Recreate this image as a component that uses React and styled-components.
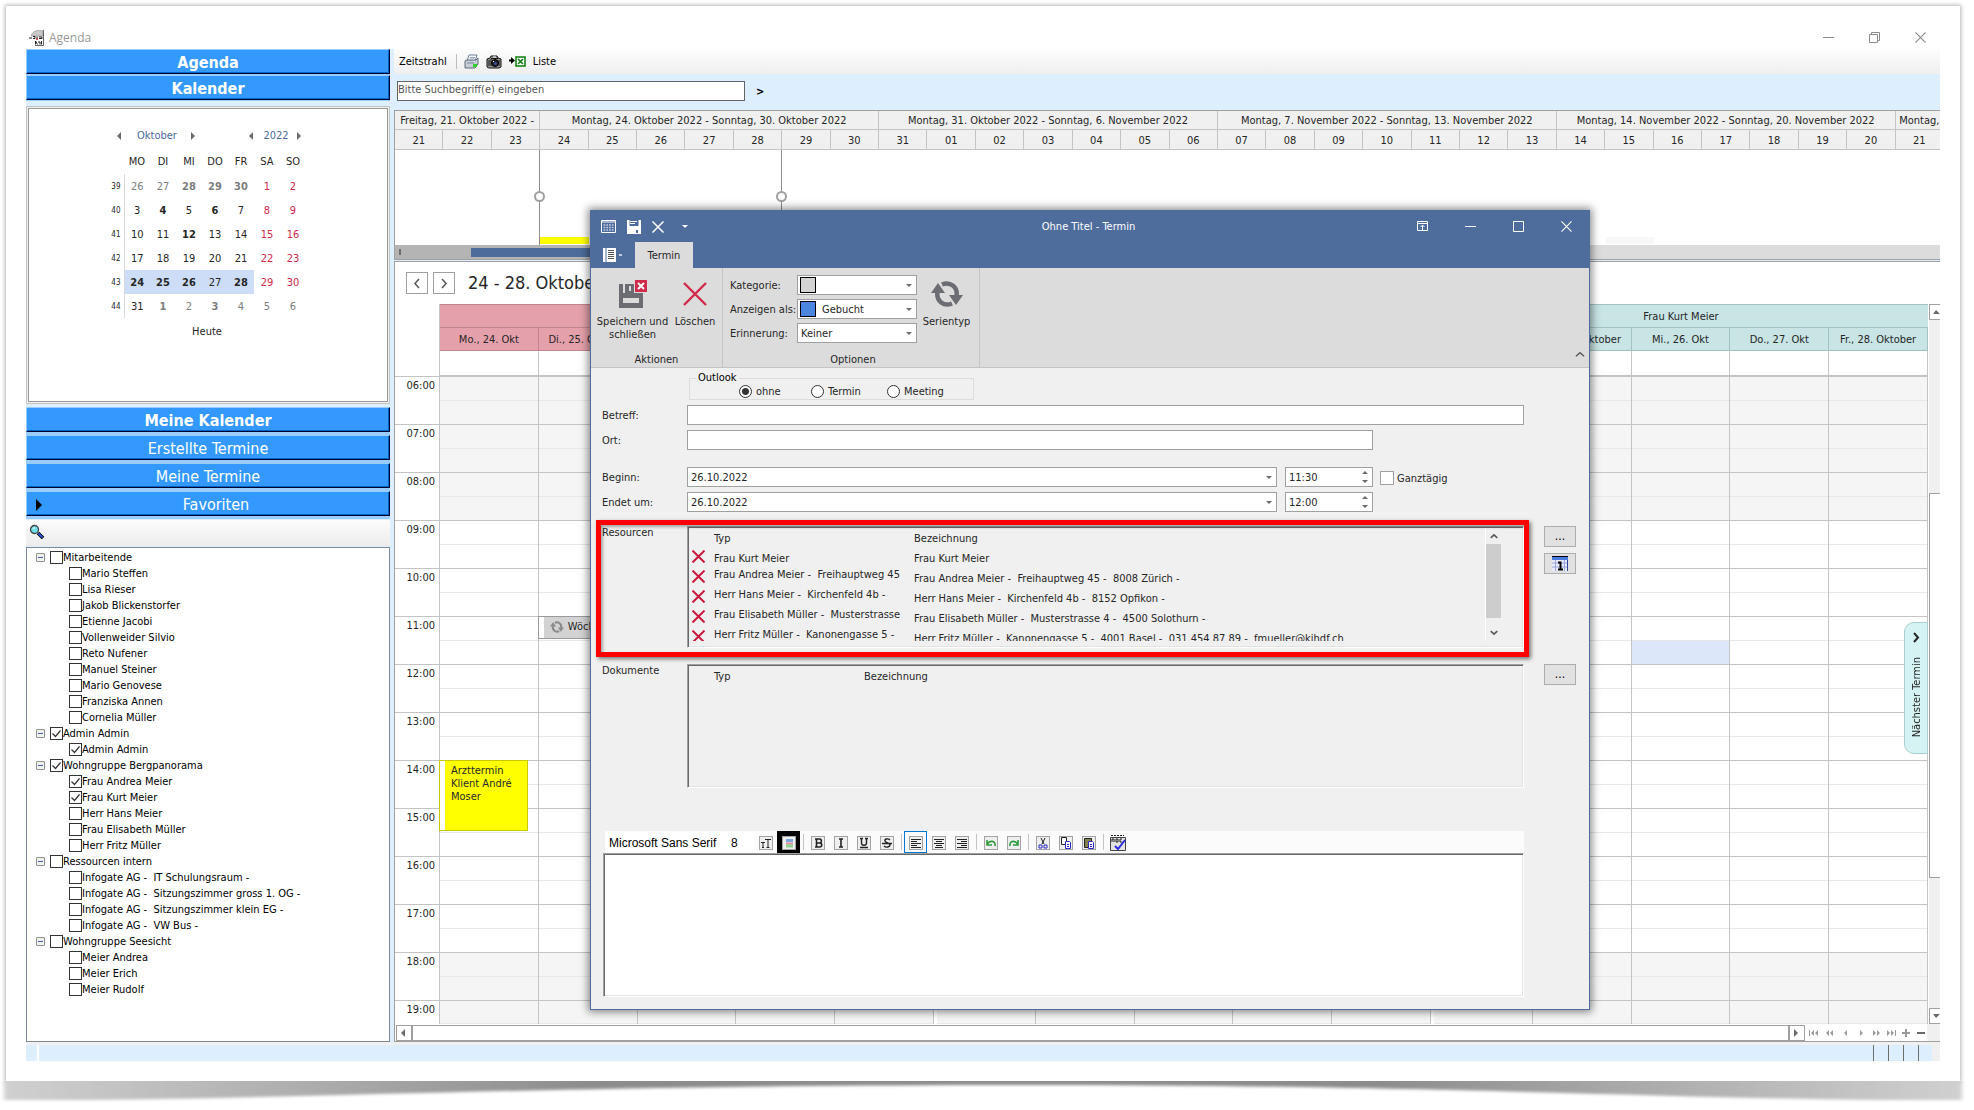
import React from 'react';
import styled, { createGlobalStyle, css } from 'styled-components';

const GlobalStyle = createGlobalStyle`
  *, *::before, *::after {
    box-sizing: border-box;
  }
  body {
    margin: 0;
    background: #ffffff;
    color: #262626;
    font-family: Tahoma, 'DejaVu Sans Condensed', 'DejaVu Sans', sans-serif;
    font-size: 11px;
    line-height: 13px;
  }
  button, input, select, textarea {
    font: inherit;
    color: inherit;
    margin: 0;
    padding: 0;
    border-radius: 0;
  }
  button {
    border: 0;
    background: none;
    cursor: pointer;
  }
  svg {
    display: block;
    flex: none;
  }
`;

/* ---------- window ---------- */

const Page = styled.div`
  padding: 6px 14px 29px 6px;
`;

const Window = styled.main`
  position: relative;
  padding: 18px 20px 20px;
  background: #ffffff;
  box-shadow: 0 0 4px 1px rgba(0, 0, 0, 0.3);
`;

const CurlShadow = styled.svg`
  position: absolute;
  left: 0;
  top: 100%;
  width: 100%;
  height: 24px;
  overflow: visible;
`;

const TitleBar = styled.header`
  display: flex;
  align-items: center;
  height: 25px;
  padding: 2px 14px 0 3px;
  color: #999999;
  font-family: 'Open Sans', sans-serif;
  font-size: 12px;

  h1 {
    flex: 1;
    margin: 0 0 0 4px;
    font-size: 12px;
    font-weight: 400;
  }
`;

const WindowButtons = styled.div`
  display: flex;
  gap: 35px;
  color: #8a8a8a;
`;

const Columns = styled.div`
  display: grid;
  grid-template-columns: 364px minmax(0, 1fr);
  column-gap: 4px;
  background: #ddeeff;
`;

/* ---------- sidebar ---------- */

const Sidebar = styled.aside`
  display: flex;
  flex-direction: column;
`;

const BarButton = styled.button`
  position: relative;
  display: flex;
  flex: none;
  align-items: center;
  justify-content: center;
  height: 25px;
  padding: 2px 0 0 ${p => (p.$indent ? 16 : 0)}px;
  border: 1px solid #000033;
  border-top-color: #99ccff;
  border-left-color: #99ccff;
  background: #3399ff;
  box-shadow: inset -1px -1px 0 #0066cc;
  color: #ffffff;
  font-size: 16px;
  font-weight: ${p => (p.$bold ? 700 : 400)};

  svg {
    position: absolute;
    left: 9px;
  }
`;

const BarGroup = styled.div`
  display: flex;
  flex-direction: column;
  gap: ${p => p.$gap}px;
  padding-bottom: ${p => p.$gap}px;
  background: #99ccff;
`;

const CalendarFrame = styled.section`
  height: 298px;
  margin: 5px 0 3px;
  padding: 1px;
  border: 1px solid #c4c4c4;
  background: #f0f0f0;
`;

const CalendarBody = styled.div`
  display: flex;
  flex-direction: column;
  align-items: center;
  height: 100%;
  padding: 18px 2px 0 0;
  border: 1px solid #9a9a9a;
  background: #ffffff;
`;

const MonthNav = styled.div`
  display: flex;
  align-items: center;
  width: 194px;
  height: 16px;
  padding: 1px 0 0 6px;
  color: #4d6b9b;

  span {
    text-align: center;
  }
`;

const MonthName = styled.span`
  width: 66px;
`;

const YearName = styled.span`
  width: 40px;
`;

const NavGap = styled.i`
  flex: 1;
`;

const MonthTable = styled.table`
  width: 198px;
  border-collapse: collapse;
  table-layout: fixed;

  th, td {
    width: 26px;
    height: 24px;
    padding: 0;
    text-align: center;
    font-weight: 400;
  }
  thead th {
    height: 31px;
    padding-top: 6px;
  }
  th:first-child {
    width: 16px;
    padding-right: 3px;
    text-align: right;
    font-size: 8px;
  }
  tbody th {
    border-right: 1px solid #d9d9d9;
  }
`;

const Day = styled.td`
  && {
    font-weight: ${p => (p.$bold ? 700 : 400)};
  }
  color: ${p => ({ out: '#7d7d7d', red: '#d1294a' }[p.$tone] || '#262626')};
  background: ${p => (p.$selected ? '#cddcf7' : 'none')};
`;

const TodayButton = styled.button`
  height: 27px;
`;

const SearchStrip = styled.div`
  flex: none;
  height: 26px;
  margin: 1px 0;
  padding: 4px 3px;
  background: linear-gradient(#fcfcfc, #ececec);
`;

const Tree = styled.ul`
  flex: 1;
  margin: 0;
  padding: 1px 0 0 9px;
  border: 1px solid #7f8896;
  background: #ffffff;
  color: #000000;
  list-style: none;
`;

const TreeRow = styled.li`
  display: flex;
  align-items: center;
  height: 16px;
  padding-left: ${p => (p.$child ? 33 : 0)}px;
  white-space: pre;

  label {
    display: flex;
    align-items: center;
  }
`;

const Expander = styled.button`
  width: 9px;
  height: 9px;
  margin-right: 5px;
  border: 1px solid #919191;
  border-radius: 1px;
  background: linear-gradient(#4b63a7, #4b63a7) center / 5px 1px no-repeat, #f1f1f1;
`;

const tick = css`
  &:checked {
    background: #ffffff
      url("data:image/svg+xml,%3Csvg xmlns='http://www.w3.org/2000/svg' viewBox='0 0 11 11'%3E%3Cpath d='M1.5 5.5l3 3 5-6' fill='none' stroke='%23333' stroke-width='1.2'/%3E%3C/svg%3E")
      center / 11px 11px no-repeat;
  }
`;

const CheckBox = styled.input.attrs({ type: 'checkbox' })`
  appearance: none;
  width: ${p => p.$size || 13}px;
  height: ${p => p.$size || 13}px;
  flex: none;
  border: 1px solid ${p => p.$line || '#333333'};
  background: #ffffff;
  ${tick}
`;

/* ---------- planner ---------- */

const Planner = styled.section`
  display: flex;
  flex-direction: column;
  min-width: 0;
`;

const Toolbar = styled.div`
  display: flex;
  align-items: center;
  gap: 7px;
  height: 25px;
  padding-left: 5px;
  background: linear-gradient(#fdfdfd, #efefef);
  color: #000000;
`;

const ToolSeparator = styled.i`
  width: 1px;
  height: 15px;
  margin-left: 2px;
  background: #bdbdbd;
`;

const SearchRow = styled.form`
  display: flex;
  align-items: center;
  gap: 11px;
  height: 36px;
  padding: 2px 0 4px 3px;

  input {
    width: 348px;
    height: 20px;
    padding-bottom: 4px;
    border: 1px solid #646464;
    background: #ffffff;
  }
  input::placeholder {
    color: #555555;
    opacity: 1;
  }
  button {
    color: #000000;
    font-weight: 700;
  }
`;

const Timeline = styled.div`
  overflow: hidden;
  border: 1px solid #a0a0a0;
  border-right: 0;
  background: #ffffff;
`;

const TimelineGrid = styled.div`
  display: grid;
  grid-template-columns: repeat(32, 1fr);
  margin-right: -4px;
  background: #f0f0f0;
`;

const TimelineCell = styled.div`
  grid-column: span ${p => p.$span || 1};
  height: ${p => (p.$span ? 19 : 20)}px;
  padding-top: ${p => (p.$span ? 3 : 4)}px;
  overflow: hidden;
  border-right: 1px solid #c4c4c4;
  border-bottom: 1px solid #c4c4c4;
  text-align: center;
  white-space: nowrap;
`;

const TimelineBody = styled.div`
  position: relative;
  height: 95px;
  margin-right: -4px;
`;

const RangeEdge = styled.div`
  position: absolute;
  top: 0;
  bottom: 0;
  width: 1px;
  margin-left: -1px;
  background: #8f8f8f;

  &::after {
    content: '';
    position: absolute;
    top: 41px;
    left: -5px;
    width: 11px;
    height: 11px;
    border: 2px solid #a0a0a0;
    border-radius: 50%;
    background: #ffffff;
  }
`;

const TimelineEvent = styled.div`
  position: absolute;
  bottom: 1px;
  height: 7px;
  background: ${p => p.$color};
`;

const TimelineScroll = styled.div`
  height: 14px;
  padding: 3px 0 2px 4px;
  background: linear-gradient(90deg, #b4b4b4 60%, #dcdcdc 60%);
  display: flex;
  gap: 70px;

  i {
    width: 2px;
    height: 6px;
    margin-top: 1px;
    background: #6d6d6d;
  }
  div {
    width: 45%;
    height: 9px;
    background: #4d6b9b;
  }
`;

const Scheduler = styled.div`
  display: flex;
  flex: 1;
  flex-direction: column;
  margin-top: 1px;
  border: 1px solid #a0a0a0;
  border-right: 0;
  background: #ffffff;
`;

const WeekBar = styled.div`
  display: flex;
  align-items: center;
  gap: 5px;
  height: 42px;
  padding: 0 0 0 11px;

  h2 {
    margin: 0 0 0 8px;
    font-size: 18px;
    line-height: 20px;
    font-weight: 400;
  }
`;

const StepButton = styled.button`
  display: flex;
  align-items: center;
  justify-content: center;
  width: 22px;
  height: 22px;
  border: 1px solid #a0a0a0;
`;

const DayGrid = styled.div`
  position: relative;
  display: grid;
  grid-template-columns: 45px minmax(0, 1fr) 12px;
`;

const TimeColumn = styled.div`
  padding-top: 72px;
  border-right: 1px solid #c4c4c4;
`;

const HourLabel = styled.div`
  height: ${p => (p.$last ? 24 : 48)}px;
  padding: 2px 4px 0 0;
  border-top: 1px solid #c4c4c4;
  text-align: right;
`;

const Resources = styled.div`
  display: grid;
  grid-template-columns: repeat(3, minmax(0, 1fr));
  gap: 3px;
`;

const Resource = styled.div`
  display: grid;
  grid-template-columns: repeat(5, minmax(0, 1fr));
  align-content: start;
`;

const ResourceName = styled.div`
  grid-column: 1 / -1;
  height: 24px;
  padding-top: 5px;
  border: 1px solid ${p => p.$line};
  border-width: 1px 0;
  background: ${p => p.$fill};
  text-align: center;
`;

const DayName = styled.div`
  height: 23px;
  padding-top: 5px;
  overflow: hidden;
  border-right: 1px solid ${p => p.$line};
  border-bottom: 1px solid ${p => p.$line};
  background: ${p => p.$fill};
  text-align: center;
  white-space: nowrap;
`;

const DayColumn = styled.div`
  position: relative;
  border-right: 1px solid #c4c4c4;
`;

const AllDay = styled.div`
  height: 26px;
  border-bottom: 2px solid #c4c4c4;
`;

const Slot = styled.div`
  height: ${p => (p.$last ? 23 : 24)}px;
  border-bottom: 1px solid ${p => (p.$half ? '#c4c4c4' : '#e8e8e8')};
  background: ${p => (p.$selected ? '#dce8fa' : p.$off ? '#f5f5f5' : '#ffffff')};
`;

const Appointment = styled.div`
  position: absolute;
  left: -1px;
  right: ${p => p.$right || 0}px;
  display: flex;
  gap: 4px;
  padding: 3px 6px 3px 11px;
  border: 1px solid ${p => p.$line};
  background: linear-gradient(90deg, #ffffff 5px, ${p => p.$fill} 5px);
  overflow: hidden;
`;

const VScroll = styled.div`
  display: flex;
  flex-direction: column;
  overflow: hidden;
  background: #f0f0f0;
  border-left: 1px solid #ffffff;
`;

const ScrollCap = styled.button`
  display: flex;
  flex: none;
  align-items: center;
  justify-content: center;
  width: 16px;
  height: 16px;
  border: 1px solid #a0a0a0;
  background: #ffffff;
`;

const VThumb = styled.div`
  width: 16px;
  height: 385px;
  margin: 173px 0 auto;
  border: 1px solid #a0a0a0;
  background: #ffffff;
`;

const NextTab = styled.button`
  position: absolute;
  right: 12px;
  top: 318px;
  display: flex;
  align-items: center;
  gap: 14px;
  width: 24px;
  height: 132px;
  padding: 9px 0;
  border: 1px solid #a9cccc;
  border-radius: 10px 0 0 10px;
  background: #d5f3f3;
  writing-mode: vertical-rl;

  span {
    transform: rotate(180deg);
  }
`;

const HScroll = styled.div`
  display: flex;
  align-items: center;
  height: 17px;
  padding: 0 13px 0 1px;
  background: linear-gradient(270deg, #f0f0f0 13px, #ffffff 13px);
`;

const HThumb = styled.div`
  flex: 1;
  height: 16px;
  border: 1px solid #a0a0a0;
`;

const RecordNav = styled.div`
  width: 118px;
  margin-left: 4px;
`;

const StatusBar = styled.footer`
  display: flex;
  justify-content: flex-end;
  gap: 14px;
  height: 19px;
  padding-right: 21px;
  border-top: 3px solid #f0f0f0;
  background: linear-gradient(90deg, transparent 11px, #ffffff 11px 13px, transparent 13px),
    linear-gradient(270deg, #f0f0f0 8px, #ddeeff 8px);

  i {
    width: 1px;
    background: #6d6d6d;
  }
`;

/* ---------- appointment dialog ---------- */

const Dialog = styled.section`
  position: absolute;
  top: 204px;
  left: 584px;
  right: 370px;
  border: 1px solid #4d6b9b;
  background: #f0f0f0;
  box-shadow: 0 0 8px 2px rgba(0, 0, 0, 0.45);
`;

const DialogHead = styled.header`
  display: grid;
  grid-template-columns: 1fr auto 1fr;
  align-items: center;
  height: 31px;
  padding: 0 17px 0 10px;
  background: #4f6d9c;
  color: #ffffff;

  h2 {
    margin: 0;
    padding-left: 4px;
    font-size: 11px;
    font-weight: 400;
  }
`;

const QuickAccess = styled.div`
  display: flex;
  align-items: center;
  gap: 11px;
`;

const CustomizeButton = styled.button`
  padding-left: 7px;
`;

const DialogButtons = styled.div`
  display: flex;
  align-items: center;
  justify-content: flex-end;
  gap: 37px;
`;

const TabRow = styled.div`
  display: flex;
  align-items: center;
  height: 26px;
  padding-left: 12px;
  background: #4f6d9c;
`;

const FileButton = styled.button`
  display: flex;
  align-items: center;
  gap: 3px;
  width: 32px;
`;

const Tab = styled.button`
  width: 58px;
  height: 26px;
  background: #dcdcdc;
`;

const Ribbon = styled.div`
  display: flex;
  height: 100px;
  border-bottom: 1px solid #c4c4c4;
  background: #dcdcdc;
`;

const RibbonGroup = styled.div`
  display: flex;
  flex-direction: column;
  justify-content: space-between;
  padding: 7px 3px 1px ${p => p.$left}px;
  border-right: 1px solid #c4c4c4;
  text-align: center;
`;

const RibbonItems = styled.div`
  display: flex;
`;

const RibbonButton = styled.button`
  display: flex;
  flex-direction: column;
  align-items: center;
  width: ${p => p.$width}px;

  span {
    margin-top: 7px;
  }
`;

const IconBox = styled.i`
  display: flex;
  align-items: center;
  height: 33px;
  padding-top: 5px;
`;

const OptionGrid = styled.div`
  display: grid;
  grid-template-columns: 67px 120px;
  row-gap: 4px;
  align-items: center;
  text-align: left;
`;

const ComboBox = styled.div`
  position: relative;
  display: flex;
  align-items: center;
  flex: ${p => (p.$grow ? 1 : 'none')};
  height: 20px;
  border: 1px solid #a0a0a0;
  background: #ffffff;

  select, input {
    appearance: none;
    width: 100%;
    height: 18px;
    padding-left: ${p => (p.$swatch ? 24 : 3)}px;
    border: 0;
    background: none;
  }
  svg {
    position: absolute;
    right: 4px;
    pointer-events: none;
  }
`;

const Swatch = styled.i`
  position: absolute;
  left: 2px;
  width: 16px;
  height: 16px;
  border: 1px solid #000000;
  background: ${p => p.color};
`;

const CollapseButton = styled.button`
  display: flex;
  align-items: flex-end;
  margin-left: auto;
  padding: 0 4px 8px;
`;

const Form = styled.form`
  padding: 3px 13px 12px 11px;
`;

const OutlookBox = styled.fieldset`
  display: block;
  width: 285px;
  height: 29px;
  margin: 0 0 5px 87px;
  padding: 0 0 0 49px;
  border: 1px solid #dcdcdc;

  legend {
    margin-left: -43px;
    padding: 0 2px;
    color: #000000;
    line-height: 14px;
  }
`;

const RadioRow = styled.div`
  display: flex;

  label {
    display: flex;
    align-items: center;
    gap: 4px;
    min-width: 72px;
    height: 13px;
  }
  label + label {
    min-width: 76px;
  }
`;

const Radio = styled.input.attrs({ type: 'radio' })`
  appearance: none;
  width: 13px;
  height: 13px;
  border: 1px solid #333333;
  border-radius: 50%;
  background: #ffffff;

  &:checked {
    background: radial-gradient(#333333 3px, #ffffff 4px);
  }
`;

const FormRow = styled.div`
  display: flex;
  align-items: center;
  height: 20px;
  margin: 0 52px ${p => p.$after || 5}px 0;
`;

const FieldLabel = styled.label`
  flex: none;
  width: 85px;
`;

const TextField = styled.input`
  flex: 1;
  height: 20px;
  padding: 0 3px;
  margin-right: ${p => (p.$short ? 151 : 0)}px;
  border: 1px solid #a0a0a0;
  background: #ffffff;
`;

const TimeBox = styled(ComboBox)`
  width: 88px;
  margin-left: 8px;
`;

const RowEnd = styled.label`
  display: flex;
  align-items: center;
  gap: 3px;
  width: 144px;
  margin-left: 7px;
  padding-top: 2px;
`;

const ListSection = styled.section`
  position: relative;
  display: grid;
  grid-template-columns: 85px minmax(0, 1fr) 32px;
  margin-top: ${p => p.$before}px;

  h3 {
    margin: 0;
    font-size: 11px;
    font-weight: 400;
  }
`;

const Highlight = styled.div`
  position: absolute;
  top: -6px;
  left: -6px;
  right: 47px;
  bottom: -9px;
  border: 5px solid #ff0000;
  box-shadow: 2px 2px 4px rgba(0, 0, 0, 0.5), inset 2px 2px 3px rgba(0, 0, 0, 0.3);
  pointer-events: none;
`;

const sunken = css`
  border: 1px solid #a0a0a0;
  border-right-color: #ffffff;
  border-bottom-color: #ffffff;
  box-shadow: inset 1px 1px 0 #696969, inset -1px -1px 0 #e3e3e3;
`;

const ListBox = styled.div`
  ${sunken}
  display: flex;
  align-items: flex-start;
  height: ${p => p.$height}px;
  margin-right: 20px;
  padding: 1px 22px 1px 1px;
`;

const ListClip = styled.div`
  flex: 1;
  height: 113px;
  overflow: hidden;
`;

const ListTable = styled.table`
  width: 100%;
  border-collapse: collapse;
  table-layout: fixed;
  white-space: pre;

  th, td {
    height: 20px;
    padding: 0;
    text-align: left;
    font-weight: 400;
  }
`;

const Col = styled.col`
  width: ${p => p.$width}px;
`;

const TypeCell = styled.td`
  vertical-align: ${p => (p.$wrapped ? 'top' : 'middle')};
`;

const RemoveButton = styled.button`
  padding-left: 3px;
`;

const ListScroll = styled.div`
  display: flex;
  flex-direction: column;
  align-items: center;
  width: 16px;
  height: 113px;
  border-left: 1px solid #ffffff;

  button {
    height: 16px;
    padding: 4px;
  }
  div {
    width: 15px;
    height: 75px;
    margin-bottom: 7px;
    background: #cdcdcd;
  }
`;

const SideButtons = styled.div`
  display: flex;
  flex-direction: column;
  gap: 6px;

  button {
    display: flex;
    align-items: center;
    justify-content: center;
    height: 21px;
    border: 1px solid #adadad;
    background: #e1e1e1;
    color: #000000;
    font-size: 12px;
  }
`;

const EditorBar = styled.div`
  display: flex;
  align-items: center;
  height: 22px;
  margin: 43px 52px 0 3px;
  background: #fbfbfb;
  color: #000000;
`;

const FontSelect = styled.select`
  appearance: none;
  width: ${p => p.$width}px;
  height: 20px;
  padding: 2px 0 0 4px;
  border: 0;
  background: #ffffff;
  font-family: 'Liberation Sans', sans-serif;
  font-size: 12px;
`;

const EditorButton = styled.button`
  display: flex;
  align-items: center;
  justify-content: center;
  width: 23px;
  height: 22px;
  padding-top: 1px;
  border: ${p => (p.$frame ? `1px solid ${p.$frame}` : 0)};
  background: ${p => p.$fill || 'none'};
`;

const EditorSeparator = styled.i`
  width: 1px;
  height: 16px;
  margin: 0 2px 0 3px;
  background: #c4c4c4;
`;

const Editor = styled.textarea`
  ${sunken}
  display: block;
  width: calc(100% - 53px);
  height: 144px;
  margin-left: 1px;
  background: #ffffff;
  resize: none;
`;

/* ---------- icons ---------- */

const triangles = {
  left: 'M5 0v8L1 4z',
  right: 'M1 0v8l4-4z',
  up: 'M0 6h7L3 2z',
  down: 'M0 2h7L3 6z'
};

const Triangle = ({ dir, color = '#6a6a6a', size = 8 }) => (
  <svg width={size} height={size} viewBox="0 0 8 8" fill={color}>
    <path d={triangles[dir]} />
  </svg>
);

const Caret = ({ color = '#6a6a6a' }) => (
  <svg width="6" height="3" viewBox="0 0 6 3" fill={color}>
    <path d="M0 0h6L3 3z" />
  </svg>
);

const Spin = () => (
  <svg width="6" height="12" viewBox="0 0 6 12" fill="#6a6a6a">
    <path d="M0 3h6L3 0zM0 9h6l-3 3z" />
  </svg>
);

const chevrons = {
  left: 'M7 1L3 5.500l4 4.500',
  right: 'M3 1l4 4.500L3 10',
  up: 'M1 8l4.500-4L10 8',
  down: 'M1 3l4.500 4L10 3'
};

const Chevron = ({ dir, width = 1.6, size = 11, color = '#5a5a5a' }) => (
  <svg width={size} height={size} viewBox="0 0 11 11" fill="none" stroke={color} strokeWidth={width}>
    <path d={chevrons[dir]} />
  </svg>
);

const Cross = ({ size, color, width = 1.2 }) => (
  <svg width={size} height={size} viewBox="0 0 12 12" fill="none" stroke={color} strokeWidth={width}>
    <path d="M.5.5l11 11M11.500.5l-11 11" />
  </svg>
);

const Minimize = () => (
  <svg width="11" height="11" viewBox="0 0 11 11" stroke="currentColor">
    <path d="M0 5.500h11" />
  </svg>
);

const Maximize = () => (
  <svg width="11" height="11" viewBox="0 0 11 11" fill="none" stroke="currentColor">
    <path d="M.5.5h10v10H.5z" />
  </svg>
);

const Restore = () => (
  <svg width="11" height="11" viewBox="0 0 11 11" fill="none" stroke="currentColor">
    <path d="M.5 2.500h8v8h-8zM2.500 2.500v-2h8v8h-2" />
  </svg>
);

const AppIcon = () => (
  <svg width="16" height="16" viewBox="0 0 16 16">
    <path d="M2 6c2-6 7-6 12-5v5z" fill="#c9c9c9" stroke="#8a8a8a" strokeWidth=".6" />
    <path d="M14.500 0v15.500H6" stroke="#666" fill="none" />
    <path d="M0 8h3M4 6.500h2v2H4M8 6.500v2M10 7h3v1.500h-3" stroke="#222" fill="none" />
    <path d="M6.500 11v3.500M6.500 11l2 3.500M9 12h2v2.500M12.500 11v3.500" stroke="#222" fill="none" />
    <circle cx="8" cy="9" r="1" fill="#b02020" />
  </svg>
);

const PrinterIcon = () => (
  <svg width="15" height="15" viewBox="0 0 15 15">
    <path d="M5 1h8l-2 6H3z" fill="#fff" stroke="#6d7f92" />
    <path d="M1 7l2-1h9l2-2v6l-3 4H1z" fill="#c8ced6" stroke="#5c6b7c" />
    <path d="M6 3.500h5M5.500 5h5" stroke="#8fa3b8" />
    <path d="M3 9h7" stroke="#77879a" />
    <rect x="9" y="10" width="4" height="3" fill="#2fd12f" />
  </svg>
);

const CameraIcon = () => (
  <svg width="16" height="14" viewBox="0 0 16 14">
    <path d="M1 4l3-1 1-2h6l1 2 3 1v8l-2 1H3l-2-1z" fill="#999" stroke="#111" />
    <path d="M3 5v6M5 4v7M13 5v6M5 3.500h7" stroke="#111" />
    <circle cx="9" cy="8" r="3.500" fill="#222" stroke="#000" />
    <circle cx="9.500" cy="8.500" r="1.500" fill="#3b4fa8" />
    <path d="M7 2h3M7 7l1-1" stroke="#fff" />
  </svg>
);

const ExcelIcon = () => (
  <svg width="17" height="11" viewBox="0 0 17 11">
    <path d="M0 4.500h3" stroke="#000" strokeWidth="2" />
    <path d="M2 1l4 3.500L2 8z" />
    <rect x="7" y="1" width="9" height="9" fill="#fff" stroke="#0a7d0a" strokeWidth="1.500" />
    <path d="M9 3l5 5M14 3L9 8" stroke="#0a7d0a" strokeWidth="1.500" />
  </svg>
);

const MagnifierIcon = () => (
  <svg width="16" height="16" viewBox="0 0 16 16">
    <path d="M9 9l5 5" stroke="#000" strokeWidth="3.500" />
    <path d="M9.500 9.500l4 4" stroke="#2956d6" strokeWidth="1.800" />
    <circle cx="5.500" cy="5.500" r="4" fill="#6fe0e8" stroke="#444" strokeWidth="1.300" />
    <path d="M4 4.500l2-1" stroke="#fff" strokeWidth="1.200" />
  </svg>
);

const GridIcon = () => (
  <svg width="15" height="13" viewBox="0 0 15 13">
    <path d="M.5.5h14v12H.5zM0 2h15" fill="none" stroke="#fff" />
    <path d="M2.500 5h10M2.500 7.500h10M2.500 10h10" stroke="#c3cde0" strokeWidth="1.500" strokeDasharray="1.800 1" />
  </svg>
);

const FloppyIcon = () => (
  <svg width="14" height="14" viewBox="0 0 14 14">
    <path d="M0 0h14v14H0z" fill="#fff" />
    <path d="M2.500 0h9v6h-9z" fill="#4f6d9c" />
    <path d="M3 1.500h7M3 3.500h5" stroke="#fff" />
    <path d="M9 10h2v3H9z" fill="#4f6d9c" />
  </svg>
);

const RibbonModeIcon = () => (
  <svg width="11" height="11" viewBox="0 0 11 11" fill="none" stroke="#fff">
    <path d="M.5.5h10v9H.5zM.5 2.500h10M5.500 9V4.500M3.500 6l2-2 2 2" />
  </svg>
);

const FileIcon = () => (
  <svg width="13" height="14" viewBox="0 0 13 14">
    <path d="M0 0h13v14H0z" fill="#fff" />
    <path d="M3 0v14" stroke="#4f6d9c" />
    <path d="M5 2.500h6M5 4.500h6M5 6.500h6M5 8.500h6M5 10.500h6" stroke="#555" />
  </svg>
);

const SaveCloseIcon = () => (
  <svg width="28" height="28" viewBox="0 0 28 28">
    <path d="M0 4h4v9h14v0h6v15H0zM4 18v5h16v-5z" fill="#6b6d73" fillRule="evenodd" />
    <path d="M6 4h9v9H6zM10 6v5h2V6z" fill="#6b6d73" fillRule="evenodd" />
    <path d="M16 0h12v12H16z" fill="#d1294a" />
    <path d="M19 3l6 6M25 3l-6 6" stroke="#fff" strokeWidth="2" />
  </svg>
);

const RepeatIcon = ({ width, height, color }) => (
  <svg width={width} height={height} viewBox="0 0 32 26">
    <g fill="none" stroke={color} strokeWidth="4.500">
      <path d="M21 22.500C13 26 5 20 6.500 11" />
      <path d="M11 3.500C19 0 27 6 25.500 15" />
    </g>
    <path d="M0 12L7 2l7 10zM18 14l7 10 7-10z" fill={color} />
  </svg>
);

const DateIcon = () => (
  <svg width="16" height="15" viewBox="0 0 16 15">
    <path d="M0 0h16v15H0z" fill="#e8ecfa" />
    <path d="M0 .5h16" stroke="#000" />
    <path d="M0 2.500h16" stroke="#4a7be0" strokeWidth="3" />
    <path d="M0 7h16M0 11h16M3.500 4v11M12.500 4v11" stroke="#9aa5d8" />
    <path d="M15.500 4v11" stroke="#35459a" />
    <path d="M6 6.500h2.500V13M6 13.500h5" stroke="#000" strokeWidth="2" fill="none" />
  </svg>
);

// 14px bevelled tile shared by the editor tool icons
const Tile = ({ children }) => (
  <svg width="14" height="14" viewBox="0 0 14 14" fill="none" stroke="#222">
    <rect x=".5" y=".5" width="13" height="13" fill="#efefef" stroke="#a3a3a3" />
    {children}
  </svg>
);

const editorTools = [
  { name: 'Schriftart', icon: <path d="M6 3.500h6M9 3v8M7.500 11.500h3M2 6.500h4M4 6v5M3 11.500h2" /> },
  {
    name: 'Farbe',
    fill: '#000000',
    icon: (
      <>
        <path d="M4 4.500h7" stroke="#7aa7e0" strokeWidth="3" />
        <path d="M4 7.500h7" stroke="#e08c98" strokeWidth="2" />
        <path d="M4 10h7" stroke="#8fd08f" strokeWidth="3" />
      </>
    )
  },
  null,
  { name: 'Fett', icon: <path d="M4 3h4.500c2.500 0 2.500 4 0 4H5M8.500 7c3 0 3 4 0 4H4M5.500 3v8" strokeWidth="1.600" /> },
  { name: 'Kursiv', icon: <path d="M5 3h4M7 3v8M5 11h4" strokeWidth="1.600" /> },
  { name: 'Unterstrichen', icon: <path d="M3 2.500h3M8 2.500h3M4.500 3v4c0 3 5 3 5 0V3M3 11.500h8" strokeWidth="1.400" /> },
  { name: 'Durchgestrichen', icon: <path d="M10 4c-2-2-6-1-5 1s5 2 5 4-4 3-6 1M2 7.500h10" strokeWidth="1.400" /> },
  null,
  { name: 'Links', frame: '#0078d7', icon: <path d="M2 3.500h10M2 5.500h6M2 7.500h10M2 9.500h6M2 11.500h10" /> },
  { name: 'Zentriert', icon: <path d="M2 3.500h10M4 5.500h6M2 7.500h10M4 9.500h6M3 11.500h8" /> },
  { name: 'Rechts', icon: <path d="M2 3.500h10M6 5.500h6M2 7.500h10M6 9.500h6M2 11.500h10" /> },
  null,
  { name: 'Rückgängig', icon: <path d="M3 4v5h5M3 9c2-5 9-5 8 1" stroke="#2f9a3c" strokeWidth="1.600" /> },
  { name: 'Wiederholen', icon: <path d="M11 4v5H6M11 9c-2-5-9-5-8 1" stroke="#2f9a3c" strokeWidth="1.600" /> },
  null,
  {
    name: 'Ausschneiden',
    icon: (
      <>
        <path d="M5 2l3 6M9 2L6 8" />
        <path d="M3 9h3v3H3zM8 9h3v3H8z" stroke="#2b2bc0" />
      </>
    )
  },
  {
    name: 'Kopieren',
    icon: (
      <>
        <path d="M2.500 1.500h5v7h-5z" fill="#fff" />
        <path d="M6.500 5.500h4l1 1v6h-5zM8 8.500h2M8 10.500h2" fill="#fff" stroke="#2b2bc0" />
      </>
    )
  },
  {
    name: 'Einfügen',
    icon: (
      <>
        <path d="M2.500 2.500h7v9h-7z" fill="#85804a" />
        <path d="M6.500 5.500h4l1 1v6h-5zM8 8.500h2M8 10.500h2" fill="#fff" stroke="#2b2bc0" />
      </>
    )
  },
  null
];

const SpellIcon = () => (
  <svg width="16" height="16" viewBox="0 0 16 16" fill="none" stroke="#222">
    <path d="M1 .5h13" strokeDasharray="2 1" />
    <path d="M.5 2.500h15v13H.5z" fill="#e3e3e3" stroke="#444" />
    <path d="M2 7V4h2v3M6 4h2v3H6zM12 4h-2v3h2" />
    <path d="M5 11l3 3 7-9" stroke="#2b2be0" strokeWidth="2" />
  </svg>
);

/* ---------- data ---------- */

const month = [
  ['39', '26', '27', '28*', '29*', '30*', '1', '2'],
  ['40', '3', '4*', '5', '6*', '7', '8', '9'],
  ['41', '10', '11', '12*', '13', '14', '15', '16'],
  ['42', '17', '18', '19', '20', '21', '22', '23'],
  ['43', '24*', '25*', '26*', '27', '28*', '29', '30'],
  ['44', '31', '1*', '2', '3*', '4', '5', '6']
];

const dayTone = (row, col) => {
  if ((row === 0 && col < 5) || (row === 5 && col > 0)) return 'out';
  return col > 4 ? 'red' : 'in';
};

const tree = [
  {
    name: 'Mitarbeitende',
    items: [
      'Mario Steffen',
      'Lisa Rieser',
      'Jakob Blickenstorfer',
      'Etienne Jacobi',
      'Vollenweider Silvio',
      'Reto Nufener',
      'Manuel Steiner',
      'Mario Genovese',
      'Franziska Annen',
      'Cornelia Müller'
    ]
  },
  { name: 'Admin Admin', checked: true, items: ['Admin Admin'], selected: 1 },
  {
    name: 'Wohngruppe Bergpanorama',
    checked: true,
    selected: 2,
    items: ['Frau Andrea Meier', 'Frau Kurt Meier', 'Herr Hans Meier', 'Frau Elisabeth Müller', 'Herr Fritz Müller']
  },
  {
    name: 'Ressourcen intern',
    items: [
      'Infogate AG -  IT Schulungsraum -',
      'Infogate AG -  Sitzungszimmer gross 1. OG -',
      'Infogate AG -  Sitzungszimmer klein EG -',
      'Infogate AG -  VW Bus -'
    ]
  },
  { name: 'Wohngruppe Seesicht', items: ['Meier Andrea', 'Meier Erich', 'Meier Rudolf'] }
];

const weeks = [
  [3, 'Freitag, 21. Oktober 2022 -'],
  [7, 'Montag, 24. Oktober 2022 - Sonntag, 30. Oktober 2022'],
  [7, 'Montag, 31. Oktober 2022 - Sonntag, 6. November 2022'],
  [7, 'Montag, 7. November 2022 - Sonntag, 13. November 2022'],
  [7, 'Montag, 14. November 2022 - Sonntag, 20. November 2022'],
  [1, 'Montag,']
];

const timelineDays = Array.from({ length: 32 }, (_, i) => {
  const day = 21 + i;
  return String(day > 31 ? day - 31 : day).padStart(2, '0');
});

const hours = Array.from({ length: 14 }, (_, i) => `${String(i + 6).padStart(2, '0')}:00`);
const dayNames = ['Mo., 24. Okt', 'Di., 25. Oktober', 'Mi., 26. Okt', 'Do., 27. Okt', 'Fr., 28. Oktober'];

const resources = [
  { fill: '#e5a1ab', line: '#c1858f' },
  { fill: '#c8e4e4', line: '#a2c2c2' },
  { name: 'Frau Kurt Meier', fill: '#c8e4e4', line: '#a2c2c2', selected: [2, 11] }
];

const attendees = [
  ['Frau Kurt Meier', 'Frau Kurt Meier'],
  ['Frau Andrea Meier -  Freihauptweg 45', 'Frau Andrea Meier -  Freihauptweg 45 -  8008 Zürich -'],
  ['Herr Hans Meier -  Kirchenfeld 4b -', 'Herr Hans Meier -  Kirchenfeld 4b -  8152 Opfikon -'],
  ['Frau Elisabeth Müller -  Musterstrasse', 'Frau Elisabeth Müller -  Musterstrasse 4 -  4500 Solothurn -'],
  [
    'Herr Fritz Müller -  Kanonengasse 5 -',
    'Herr Fritz Müller -  Kanonengasse 5 -  4001 Basel -  031 454 87 89 -  fmueller@kjhdf.ch'
  ]
];

/* ---------- parts ---------- */

const MiniCalendar = () => (
  <CalendarFrame>
    <CalendarBody>
      <MonthNav>
        <button type="button" aria-label="Voriger Monat"><Triangle dir="left" /></button>
        <MonthName>Oktober</MonthName>
        <button type="button" aria-label="Nächster Monat"><Triangle dir="right" /></button>
        <NavGap />
        <button type="button" aria-label="Voriges Jahr"><Triangle dir="left" /></button>
        <YearName>2022</YearName>
        <button type="button" aria-label="Nächstes Jahr"><Triangle dir="right" /></button>
      </MonthNav>
      <MonthTable>
        <thead>
          <tr>
            <th />
            {['MO', 'DI', 'MI', 'DO', 'FR', 'SA', 'SO'].map(d => (
              <th key={d}>{d}</th>
            ))}
          </tr>
        </thead>
        <tbody>
          {month.map(([week, ...days], row) => (
            <tr key={week}>
              <th>{week}</th>
              {days.map((d, col) => (
                <Day
                  key={d}
                  $bold={d.endsWith('*')}
                  $tone={dayTone(row, col)}
                  $selected={row === 4 && col < 5}
                >
                  {d.replace('*', '')}
                </Day>
              ))}
            </tr>
          ))}
        </tbody>
      </MonthTable>
      <TodayButton type="button">Heute</TodayButton>
    </CalendarBody>
  </CalendarFrame>
);

const CalendarTree = () => (
  <Tree>
    {tree.map(group => (
      <React.Fragment key={group.name}>
        <TreeRow>
          <Expander type="button" aria-label="Zuklappen" />
          <label>
            <CheckBox defaultChecked={group.checked} />
            {group.name}
          </label>
        </TreeRow>
        {group.items.map((item, i) => (
          <TreeRow key={item} $child>
            <label>
              <CheckBox defaultChecked={i < (group.selected || 0)} />
              {item}
            </label>
          </TreeRow>
        ))}
      </React.Fragment>
    ))}
  </Tree>
);

const TimelinePanel = () => (
  <Timeline>
    <TimelineGrid>
      {weeks.map(([span, text]) => (
        <TimelineCell key={text} $span={span}>{text}</TimelineCell>
      ))}
      {timelineDays.map((d, i) => (
        <TimelineCell key={i}>{d}</TimelineCell>
      ))}
    </TimelineGrid>
    <TimelineBody>
      <TimelineEvent $color="#ffff00" style={{ left: `${300 / 32}%`, width: `${100 / 32}%` }} />
      <TimelineEvent $color="#f8f8f8" style={{ left: `${2500 / 32}%`, width: `${100 / 32}%` }} />
      <RangeEdge style={{ left: `${300 / 32}%` }} />
      <RangeEdge style={{ left: `${800 / 32}%` }} />
    </TimelineBody>
    <TimelineScroll>
      <i />
      <div />
    </TimelineScroll>
  </Timeline>
);

const isOffHour = slot => slot < 6 || slot > 23;

const ResourceColumns = ({ resource, first }) => (
  <Resource>
    <ResourceName $fill={resource.fill} $line={resource.line}>{resource.name}</ResourceName>
    {dayNames.map(name => (
      <DayName key={name} $fill={resource.fill} $line={resource.line}>{name}</DayName>
    ))}
    {dayNames.map((name, col) => (
      <DayColumn key={name}>
        <AllDay />
        {Array.from({ length: 27 }, (_, i) => (
          <Slot
            key={i}
            $half={i % 2 === 1}
            $last={i === 26}
            $off={isOffHour(i)}
            $selected={resource.selected && resource.selected[0] === col && resource.selected[1] === i}
          />
        ))}
        {first && col === 0 && (
          <Appointment $fill="#ffff00" $line="#c8c800" $right={10} style={{ top: 409, height: 71 }}>
            Arzttermin Klient André Moser
          </Appointment>
        )}
        {first && col === 1 && (
          <Appointment $fill="#d3d3d3" $line="#9a9a9a" style={{ top: 265, height: 23 }}>
            <RepeatIcon width={14} height={14} color="#8a8a8a" />
            Wöchentlich
          </Appointment>
        )}
      </DayColumn>
    ))}
  </Resource>
);

const SchedulerPanel = () => (
  <Scheduler>
    <WeekBar>
      <StepButton type="button" aria-label="Zurück"><Chevron dir="left" /></StepButton>
      <StepButton type="button" aria-label="Vor"><Chevron dir="right" /></StepButton>
      <h2>24 - 28. Oktober</h2>
    </WeekBar>
    <DayGrid>
      <TimeColumn>
        {hours.map((h, i) => (
          <HourLabel key={h} $last={i === hours.length - 1}>{h}</HourLabel>
        ))}
      </TimeColumn>
      <Resources>
        {resources.map((r, i) => (
          <ResourceColumns key={i} resource={r} first={i === 0} />
        ))}
      </Resources>
      <VScroll>
        <ScrollCap type="button" aria-label="Nach oben"><Triangle dir="up" /></ScrollCap>
        <VThumb />
        <ScrollCap type="button" aria-label="Nach unten"><Triangle dir="down" /></ScrollCap>
      </VScroll>
      <NextTab type="button">
        <Chevron dir="right" width={2} color="#262626" />
        <span>Nächster Termin</span>
      </NextTab>
    </DayGrid>
    <HScroll>
      <ScrollCap type="button" aria-label="Nach links"><Triangle dir="left" /></ScrollCap>
      <HThumb />
      <ScrollCap type="button" aria-label="Nach rechts"><Triangle dir="right" /></ScrollCap>
      <RecordNav>
        <svg width="118" height="10" viewBox="0 0 118 10" fill="#9a9a9a">
          <path d="M0 2h1v6H0zM5 2v6L2 5zM9 2v6L6 5zM20 2v6l-3-3zM24 2v6l-3-3zM38 2v6l-3-3zM51 2v6l3-3zM64 2v6l3-3zM68 2v6l3-3zM78 2v6l3-3zM82 2v6l3-3zM86 2h1v6h-1zM93 4h3V1h2v3h3v2h-3v3h-2V6h-3z" />
          <path d="M108 4h8v2h-8z" fill="#6a6a6a" />
        </svg>
      </RecordNav>
    </HScroll>
  </Scheduler>
);

const DateRow = ({ id, label, date, time, after, children }) => (
  <FormRow $after={after}>
    <FieldLabel htmlFor={id}>{label}</FieldLabel>
    <ComboBox $grow>
      <input id={id} defaultValue={date} />
      <Caret />
    </ComboBox>
    <TimeBox>
      <input aria-label={`${label} Uhrzeit`} defaultValue={time} />
      <Spin />
    </TimeBox>
    <RowEnd as={children ? 'label' : 'span'}>{children}</RowEnd>
  </FormRow>
);

const AppointmentDialog = () => (
  <Dialog role="dialog" aria-label="Termin">
    <DialogHead>
      <QuickAccess>
        <GridIcon />
        <button type="button" aria-label="Speichern"><FloppyIcon /></button>
        <button type="button" aria-label="Löschen"><Cross size={12} color="#fff" width={1.5} /></button>
        <CustomizeButton type="button" aria-label="Anpassen"><Caret color="#fff" /></CustomizeButton>
      </QuickAccess>
      <h2>Ohne Titel - Termin</h2>
      <DialogButtons>
        <button type="button" aria-label="Menüband"><RibbonModeIcon /></button>
        <button type="button" aria-label="Minimieren"><Minimize /></button>
        <button type="button" aria-label="Maximieren"><Maximize /></button>
        <button type="button" aria-label="Schliessen"><Cross size={11} color="#fff" /></button>
      </DialogButtons>
    </DialogHead>
    <TabRow>
      <FileButton type="button" aria-label="Datei">
        <FileIcon />
        <svg width="3" height="2"><path d="M0 0h3v2H0z" fill="#c3cde0" /></svg>
      </FileButton>
      <Tab type="button">Termin</Tab>
    </TabRow>
    <Ribbon>
      <RibbonGroup $left={3}>
        <RibbonItems>
          <RibbonButton type="button" $width={77}>
            <IconBox><SaveCloseIcon /></IconBox>
            <span>Speichern und schließen</span>
          </RibbonButton>
          <RibbonButton type="button" $width={48}>
            <IconBox><Cross size={24} color="#d1294a" width={1.2} /></IconBox>
            <span>Löschen</span>
          </RibbonButton>
        </RibbonItems>
        Aktionen
      </RibbonGroup>
      <RibbonGroup $left={7}>
        <RibbonItems>
          <OptionGrid>
            <label htmlFor="category">Kategorie:</label>
            <ComboBox $swatch>
              <Swatch color="#d3d3d3" />
              <select id="category"><option aria-label="Keine" /></select>
              <Caret />
            </ComboBox>
            <label htmlFor="show-as">Anzeigen als:</label>
            <ComboBox $swatch>
              <Swatch color="#4a86e0" />
              <select id="show-as"><option>Gebucht</option></select>
              <Caret />
            </ComboBox>
            <label htmlFor="reminder">Erinnerung:</label>
            <ComboBox>
              <select id="reminder"><option>Keiner</option></select>
              <Caret />
            </ComboBox>
          </OptionGrid>
          <RibbonButton type="button" $width={59}>
            <IconBox><RepeatIcon width={32} height={26} color="#6b6d73" /></IconBox>
            <span>Serientyp</span>
          </RibbonButton>
        </RibbonItems>
        Optionen
      </RibbonGroup>
      <CollapseButton type="button" aria-label="Menüband zuklappen"><Chevron dir="up" size={10} /></CollapseButton>
    </Ribbon>
    <Form>
      <OutlookBox>
        <legend>Outlook</legend>
        <RadioRow>
          <label><Radio name="outlook" defaultChecked />ohne</label>
          <label><Radio name="outlook" />Termin</label>
          <label><Radio name="outlook" />Meeting</label>
        </RadioRow>
      </OutlookBox>
      <FormRow>
        <FieldLabel htmlFor="subject">Betreff:</FieldLabel>
        <TextField id="subject" />
      </FormRow>
      <FormRow $after={17}>
        <FieldLabel htmlFor="place">Ort:</FieldLabel>
        <TextField id="place" $short />
      </FormRow>
      <DateRow id="begin" label="Beginn:" date="26.10.2022" time="11:30">
        <CheckBox $size={14} $line="#a0a0a0" />
        Ganztägig
      </DateRow>
      <DateRow id="end" label="Endet um:" date="26.10.2022" time="12:00" after={14} />

      <ListSection $before={0}>
        <h3>Resourcen</h3>
        <ListBox $height={122}>
          <ListClip>
            <ListTable>
              <colgroup>
                <Col $width={25} />
                <Col $width={200} />
                <Col />
              </colgroup>
              <thead>
                <tr>
                  <th />
                  <th>Typ</th>
                  <th>Bezeichnung</th>
                </tr>
              </thead>
              <tbody>
                {attendees.map(([type, name], i) => (
                  <tr key={name}>
                    <td>
                      <RemoveButton type="button" aria-label="Entfernen">
                        <Cross size={13} color="#c8183c" width={1.8} />
                      </RemoveButton>
                    </td>
                    <TypeCell $wrapped={i > 0}>{type}</TypeCell>
                    <td>{name}</td>
                  </tr>
                ))}
              </tbody>
            </ListTable>
          </ListClip>
          <ListScroll>
            <button type="button" aria-label="Nach oben"><Chevron dir="up" size={8} width={2.4} /></button>
            <div />
            <button type="button" aria-label="Nach unten"><Chevron dir="down" size={8} width={2.4} /></button>
          </ListScroll>
        </ListBox>
        <SideButtons>
          <button type="button">...</button>
          <button type="button" aria-label="Datum"><DateIcon /></button>
        </SideButtons>
        <Highlight />
      </ListSection>

      <ListSection $before={16}>
        <h3>Dokumente</h3>
        <ListBox $height={124}>
          <ListTable>
            <colgroup>
              <Col $width={25} />
              <Col $width={150} />
              <Col />
            </colgroup>
            <thead>
              <tr>
                <th />
                <th>Typ</th>
                <th>Bezeichnung</th>
              </tr>
            </thead>
          </ListTable>
        </ListBox>
        <SideButtons>
          <button type="button">...</button>
        </SideButtons>
      </ListSection>

      <EditorBar>
        <FontSelect $width={122} aria-label="Schriftart"><option>Microsoft Sans Serif</option></FontSelect>
        <FontSelect $width={27} aria-label="Schriftgrösse"><option>8</option></FontSelect>
        {editorTools.map((tool, i) =>
          tool ? (
            <EditorButton key={tool.name} type="button" aria-label={tool.name} $fill={tool.fill} $frame={tool.frame}>
              <Tile>{tool.icon}</Tile>
            </EditorButton>
          ) : (
            <EditorSeparator key={i} />
          )
        )}
        <EditorButton type="button" aria-label="Rechtschreibung"><SpellIcon /></EditorButton>
      </EditorBar>
      <Editor aria-label="Beschreibung" />
    </Form>
  </Dialog>
);

const App = () => (
  <Page>
    <GlobalStyle />
    <Window>
      <CurlShadow viewBox="0 0 1000 24" preserveAspectRatio="none" aria-hidden="true">
        <defs>
          <linearGradient id="curl">
            <stop offset="0" stopColor="#d0d0d0" />
            <stop offset=".3" stopColor="#8c8c8c" />
            <stop offset=".7" stopColor="#8c8c8c" />
            <stop offset="1" stopColor="#d0d0d0" />
          </linearGradient>
          <filter id="soft"><feGaussianBlur stdDeviation="1 1.500" /></filter>
          <clipPath id="below"><path d="M-5 0h1010v30H-5z" /></clipPath>
        </defs>
        <g clipPath="url(#below)">
          <path d="M-1-6V19H40C160 17 280 5 500 4S840 17 960 19H1001V-6z" fill="url(#curl)" filter="url(#soft)" />
        </g>
      </CurlShadow>
      <TitleBar>
        <AppIcon />
        <h1>Agenda</h1>
        <WindowButtons>
          <button type="button" aria-label="Minimieren"><Minimize /></button>
          <button type="button" aria-label="Verkleinern"><Restore /></button>
          <button type="button" aria-label="Schliessen"><Cross size={11} color="#8a8a8a" /></button>
        </WindowButtons>
      </TitleBar>
      <Columns>
        <Sidebar>
          <BarGroup $gap={1}>
            <BarButton type="button" $bold>Agenda</BarButton>
            <BarButton type="button" $bold>Kalender</BarButton>
          </BarGroup>
          <MiniCalendar />
          <BarGroup $gap={3}>
            <BarButton type="button" $bold>Meine Kalender</BarButton>
            <BarButton type="button">Erstellte Termine</BarButton>
            <BarButton type="button">Meine Termine</BarButton>
            <BarButton type="button" $indent>
              <svg width="6" height="12" viewBox="0 0 6 12"><path d="M0 0v12l6-6z" /></svg>
              Favoriten
            </BarButton>
          </BarGroup>
          <SearchStrip>
            <button type="button" aria-label="Suchen"><MagnifierIcon /></button>
          </SearchStrip>
          <CalendarTree />
        </Sidebar>
        <Planner>
          <Toolbar>
            <button type="button">Zeitstrahl</button>
            <ToolSeparator />
            <button type="button" aria-label="Drucken"><PrinterIcon /></button>
            <button type="button" aria-label="Bild"><CameraIcon /></button>
            <button type="button" aria-label="Excel"><ExcelIcon /></button>
            <button type="button">Liste</button>
          </Toolbar>
          <SearchRow>
            <input aria-label="Suche" placeholder="Bitte Suchbegriff(e) eingeben" />
            <button type="button">&gt;</button>
          </SearchRow>
          <TimelinePanel />
          <SchedulerPanel />
        </Planner>
      </Columns>
      <StatusBar>
        <i />
        <i />
        <i />
        <i />
      </StatusBar>
      <AppointmentDialog />
    </Window>
  </Page>
);

export default App;
